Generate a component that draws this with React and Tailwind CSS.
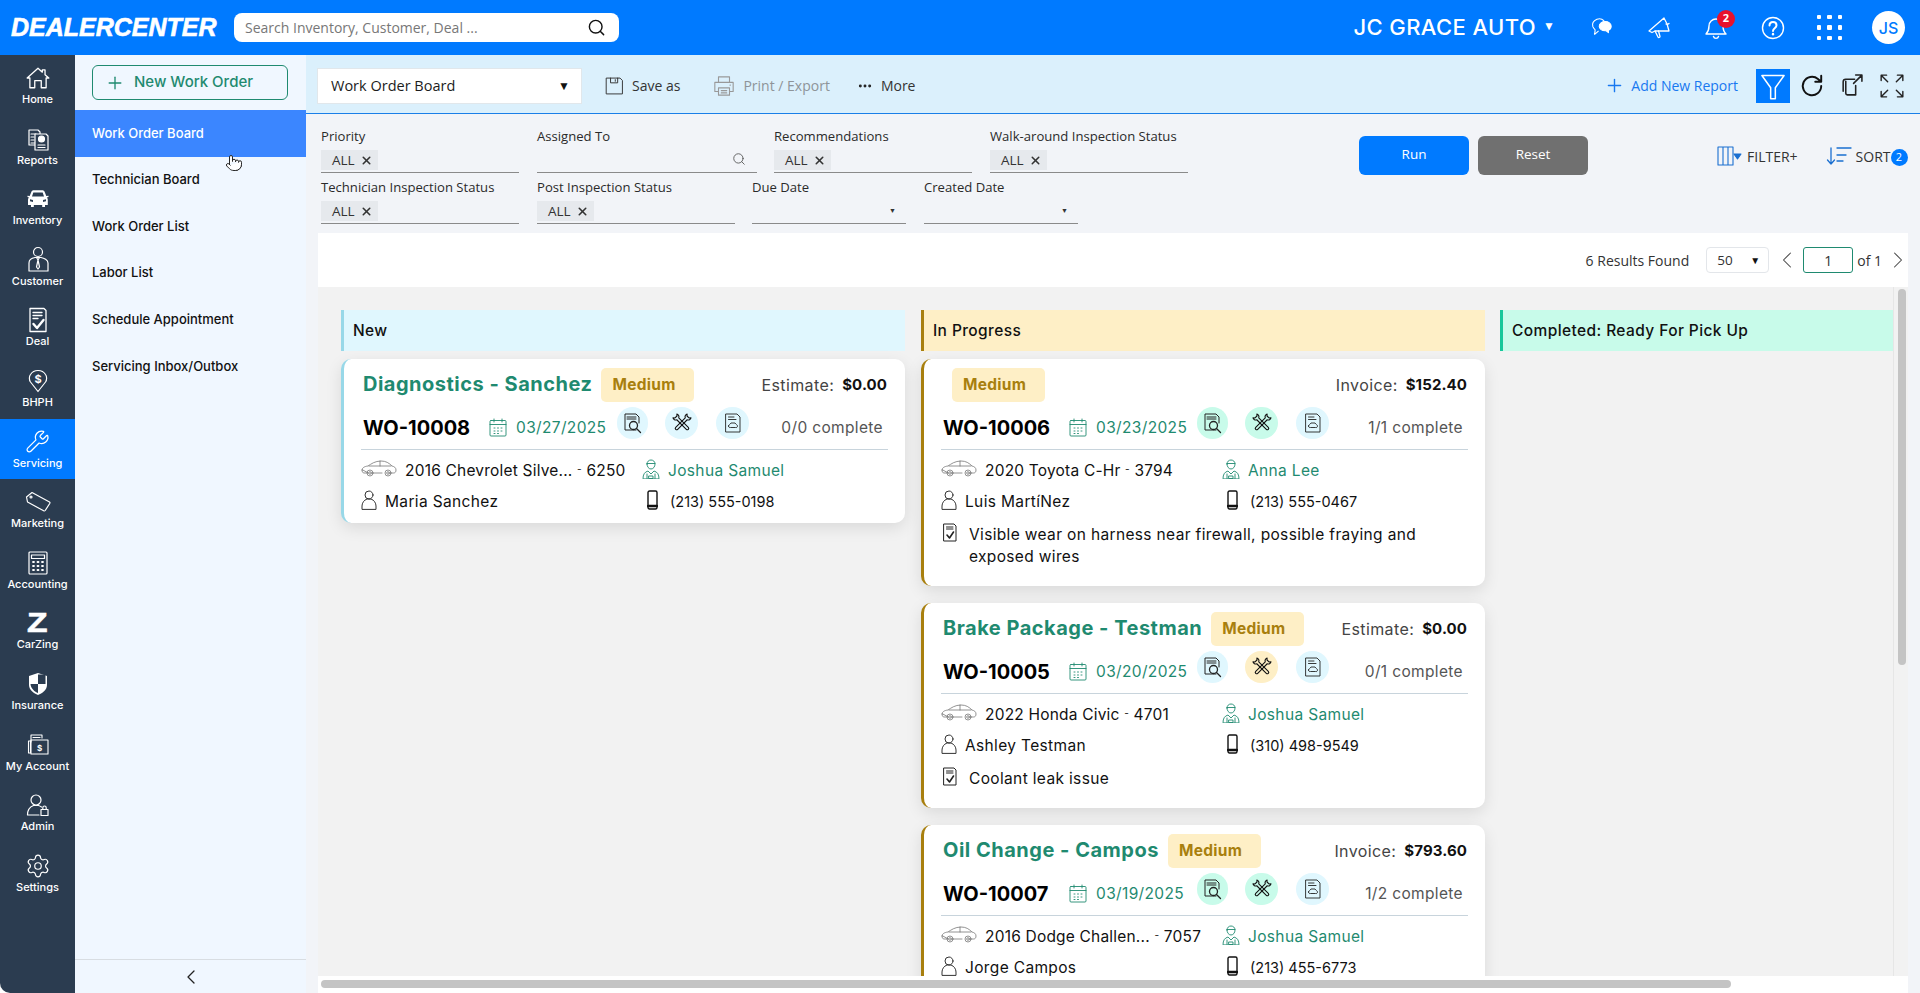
import { Search, Plus, Settings, Wrench, ChevronLeft, ChevronRight, X, MoreHorizontal, Pointer } from "lucide-react";

const mont = "font-['Inter',sans-serif]";
const body = "text-[15.5px] tracking-[0.35px]";

const Ic = ({ w = 24, h = 24, box = "0 0 24 24", sw = 1.2, color = "currentColor", className = "", children }) => (
  <svg width={w} height={h} viewBox={box} fill="none" stroke={color} strokeWidth={sw} strokeLinecap="round" strokeLinejoin="round" className={className}>
    {children}
  </svg>
);

const railItems = [
  {
    label: "Home",
    icon: (
      <Ic w={26} h={26}>
        <path d="M2 12 12 3l4 3.6V4.500h2.500v4.400L22 12h-2.500v9H15v-6.500H9V21H4.500v-9z" />
      </Ic>
    ),
  },
  {
    label: "Reports",
    icon: (
      <Ic w={24} h={26}>
        <path d="M3 3h9l2 2v13H3z" />
        <path d="M5 7h5M5 10h3M5 13h3M5 16h5" />
        <path d="M9 7h11l2 2v14H9z" fill="#2b3c50" />
        <circle cx="15.500" cy="12" r="3" fill="#fff" />
        <path d="M12 18h7M12 20.500h7" />
      </Ic>
    ),
  },
  {
    label: "Inventory",
    icon: (
      <svg width="22" height="18" viewBox="0 0 22 18" fill="#fff">
        <path d="M4.500 1.500C5 .7 6 .3 7 .3h8c1 0 2 .4 2.500 1.200L19.300 6l2.200-.3v1.300l-1.700.4c.7.7 1 1.500 1 2.400v5.200H18v2h-2.800v-2H6.800v2H4v-2H1V9.800c0-.9.300-1.700 1-2.400L.5 7V5.700L2.700 6zM5 6.500h12l-1.300-4H6.300zM3 9.300v2l3 .7V10zm16 0-3 .7v2l3-.7z" fillRule="evenodd" />
      </svg>
    ),
  },
  {
    label: "Customer",
    icon: (
      <Ic w={22} h={28} box="0 0 22 28">
        <circle cx="11" cy="6" r="4.500" />
        <path d="M2 25V17c0-3 3-5 6-5.500h6c3 .5 7 2.500 7 5.500v8z" />
        <path d="M9.500 11.500 11 14l1.500-2.500M11 14l-1.500 7L11 23l1.500-2L11 14" />
      </Ic>
    ),
  },
  {
    label: "Deal",
    icon: (
      <Ic w={20} h={26} box="0 0 20 26" sw={1.3}>
        <path d="M2 1.500h14l2 2V24.500H2z" />
        <path d="M5 5.500h9M5 8.500h9M5 11.500h5" />
        <path d="m5.500 17 3.500 4 6.500-8" strokeWidth="2.400" />
      </Ic>
    ),
  },
  {
    label: "BHPH",
    icon: (
      <Ic w={20} h={24} box="0 0 20 24">
        <path d="M10 22.500 2.500 13C1 11 1 7.500 2.500 5.500 4 3 7 1.500 10 1.500s6 1.500 7.500 4C19 7.500 19 11 17.500 13z" />
        <text x="10" y="13.500" textAnchor="middle" fontSize="11" fontWeight="700" fill="#fff" stroke="none" fontFamily="Inter">$</text>
      </Ic>
    ),
  },
  { label: "Servicing", icon: <Wrench size={25} strokeWidth={1.2} />, active: true },
  {
    label: "Marketing",
    icon: (
      <Ic w={26} h={22} box="0 0 26 22">
        <path d="M1.500 6 7 1.500 24.500 11c.5.300.5 1 .2 1.500l-4.500 7c-.4.500-1 .6-1.500.3L2.500 11z" />
        <circle cx="6" cy="6" r="1" />
      </Ic>
    ),
  },
  {
    label: "Accounting",
    icon: (
      <Ic w={20} h={24} box="0 0 20 24">
        <rect x="1" y="1" width="18" height="22" rx="1" />
        <rect x="3.500" y="4" width="13" height="3.500" />
        <path d="M5 11h1M9.500 11h1M14 11h1M5 15h1M9.500 15h1M14 15h1M5 19h1M9.500 19h1M14 19h1" strokeWidth="1.800" />
      </Ic>
    ),
  },
  {
    label: "CarZing",
    icon: <span className="font-['Liberation_Sans',sans-serif] font-bold text-[24px] leading-[28px] text-white scale-x-[1.4] scale-y-[1.12] [-webkit-text-stroke:0.5px_white]">Z</span>,
  },
  {
    label: "Insurance",
    icon: (
      <svg width="20" height="24" viewBox="0 0 20 24">
        <path d="M10 1 19 4v9c0 5-5 8.500-9 10C6 21.500 1 18 1 13V4z" fill="#fff" />
        <path d="M10 2.500h7.500V12H10zM10 12H2.500c.3 4.500 4.500 8 7.500 9z" fill="#2b3c50" />
      </svg>
    ),
  },
  {
    label: "My Account",
    icon: (
      <Ic w={22} h={24} box="0 0 22 24" sw={1.1}>
        <path d="M4 9V2h11v3" />
        <path d="M1.500 8h2v12h-2zM4 7h17v14H4z" />
        <path d="M6 4.500h7" />
        <text x="12.500" y="18" textAnchor="middle" fontSize="8" fontWeight="700" fill="#fff" stroke="none" fontFamily="Inter">$</text>
      </Ic>
    ),
  },
  {
    label: "Admin",
    icon: (
      <Ic w={24} h={24}>
        <circle cx="10" cy="7" r="5" />
        <path d="M1.500 22c0-5 2-8 6-9.500h5c1 .3 2 .8 3 1.500M1.500 22H13" />
        <rect x="15" y="16.500" width="7" height="6" />
        <path d="M16.800 16.500v-1.800a1.700 1.700 0 0 1 3.400 0v1.800" />
      </Ic>
    ),
  },
  { label: "Settings", icon: <Settings size={26} strokeWidth={1.1} /> },
];

const subItems = ["Work Order Board", "Technician Board", "Work Order List", "Labor List", "Schedule Appointment", "Servicing Inbox/Outbox"];

const Rail = () => (
  <div className="w-[75px] shrink-0 bg-[#2b3c50] rounded-bl-[10px] text-white">
    {railItems.map((r) => (
      <div key={r.label} className={`h-[60.6px] flex flex-col items-center pt-[9px] ${r.active ? "bg-[#007aff]" : ""}`}>
        <div className="h-[28px] flex items-center justify-center">{r.icon}</div>
        <div className={`${mont} text-[11px] leading-[14px] font-medium whitespace-nowrap`}>{r.label}</div>
      </div>
    ))}
  </div>
);

const SubNav = () => (
  <div className={`w-[231px] shrink-0 bg-[#f0f7ff] flex flex-col relative ${mont}`}>
    <div className="h-[55px] pl-[17px] pt-[10px]">
      <div className="w-[196px] h-[35px] border border-[#1f8a70] rounded-[6px] flex items-center pl-[12px] text-[#1f8a70]">
        <Plus size={20} strokeWidth={1.6} />
        <span className="ml-[9px] text-[15px] font-medium">New Work Order</span>
      </div>
    </div>
    {subItems.map((s, i) => (
      <div key={s} className={`h-[46.6px] flex items-center pl-[17px] text-[13px] font-medium ${i === 0 ? "bg-[#3b86ff] text-white" : "text-[#111]"}`}>
        {s}
      </div>
    ))}
    <Pointer size={18} strokeWidth={1.3} fill="#fff" className="absolute left-[150px] top-[99px] text-[#222]" />
    <div className="mt-auto h-[34px] border-t border-[#d8dde2] flex items-center justify-center">
      <ChevronLeft size={24} strokeWidth={1.3} className="text-[#222]" />
    </div>
  </div>
);

const Chip = () => (
  <span className="inline-flex items-center h-[20px] w-[57px] pl-[11px] bg-[#e6e9ed] text-[13.5px] text-[#333]">
    ALL <X size={13} strokeWidth={2.8} className="ml-[5px]" />
  </span>
);

const Field = ({ label, w, chip, search, caret }) => (
  <div className="h-[46px] shrink-0 relative" style={{ width: w }}>
    <div className="text-[13.1px] leading-[18px] text-[#2a2a2a] whitespace-nowrap">{label}</div>
    <div className="h-[28px] pt-[5px] border-b border-[#8a8a8a] flex items-start">
      {chip && <Chip />}
      {search && <Search size={14} strokeWidth={1.5} className="ml-auto mr-[11px] mt-[2px] text-[#555]" />}
      {caret && <span className="ml-auto mr-[10px] mt-[6px] text-[7px] leading-[8px] text-[#333]">▼</span>}
    </div>
  </div>
);

const Toolbar = () => (
  <div className="h-[59px] shrink-0 bg-[#dbf0fc] border-b border-[#1a7fe8] flex items-center pl-[11px] pt-[3px] text-[14px]">
    <div className="w-[265px] h-[36px] bg-white border border-[#e1e7eb] flex items-center pl-[13px] pr-[11px] text-[14.5px] text-[#1c1c1c]">
      Work Order Board
      <span className="ml-auto text-[12px] text-[#111]">▼</span>
    </div>
    <Ic w={19} h={20} color="#333" className="ml-[23px]">
      <path d="M2 2h17l3 3v17H2z" />
      <path d="M7 2v6h9V2M13 4v2" />
    </Ic>
    <span className="ml-[8px] text-[#333]">Save as</span>
    <Ic w={22} h={22} color="#999" className="ml-[33px]">
      <path d="M6 8V2h12v6M6 18H2V8h20v10h-4" />
      <path d="M6 14h12v8H6zM9 17h6M9 19.500h6M18.500 11h.5" />
    </Ic>
    <span className="ml-[8px] text-[#8e9499]">Print / Export</span>
    <MoreHorizontal size={16} strokeWidth={2.4} className="ml-[27px] text-[#222]" />
    <span className="ml-[8px] text-[#333]">More</span>
    <Plus size={21} strokeWidth={1.6} className="ml-auto text-[#1878f0]" />
    <span className="ml-[6px] text-[#1878f0]">Add New Report</span>
    <div className="ml-[18px] w-[34px] h-[34px] bg-[#007aff] flex items-center justify-center">
      <Ic w={28} h={28} color="#fff" sw={1.3}>
        <path d="M2.500 3h19L14 13.500V23h-4v-9.500z" />
      </Ic>
    </div>
    <Ic w={26} h={26} color="#111" sw={1.8} className="ml-[9px]">
      <path d="M20.500 12a8.500 8.500 0 1 1-3-6.500L20.500 8M20.500 2.500V8H15" />
    </Ic>
    <Ic w={25} h={25} color="#222" sw={1.5} className="ml-[14px]">
      <path d="M15 6H6.500A2.500 2.500 0 0 0 4 8.500v9M8 21h8V12M8 21a1.500 1.500 0 0 1-1.500-1.500V8M14 10l8-8M16 2h6v6" />
    </Ic>
    <Ic w={26} h={26} color="#222" sw={1.3} className="ml-[15px] mr-[15px]">
      <path d="m2 2 6 6M2 2v5M2 2h5M22 2l-6 6M22 2v5M22 2h-5M2 22l6-6M2 22v-5M2 22h5M22 22l-6-6M22 22v-5M22 22h-5" />
    </Ic>
  </div>
);

const Filters = () => (
  <div className="h-[119px] shrink-0 flex items-start pt-[13px] pl-[15px]">
    <div className="w-[867px] shrink-0 flex flex-col gap-[5px]">
      <div className="flex">
        <Field label="Priority" w={198} chip />
        <div className="w-[18px]" />
        <Field label="Assigned To" w={220} search />
        <div className="w-[17px]" />
        <Field label="Recommendations" w={198} chip />
        <div className="w-[18px]" />
        <Field label="Walk-around Inspection Status" w={198} chip />
      </div>
      <div className="flex">
        <Field label="Technician Inspection Status" w={198} chip />
        <div className="w-[18px]" />
        <Field label="Post Inspection Status" w={198} chip />
        <div className="w-[17px]" />
        <Field label="Due Date" w={154} caret />
        <div className="w-[18px]" />
        <Field label="Created Date" w={154} caret />
      </div>
    </div>
    <button className="ml-[171px] mt-[9px] w-[110px] h-[39px] pb-[2px] bg-[#007aff] rounded-[6px] text-white text-[13.5px]">Run</button>
    <button className="ml-[9px] mt-[9px] w-[110px] h-[39px] pb-[2px] bg-[#707070] rounded-[6px] text-white text-[13.5px]">Reset</button>
    <div className="ml-[129px] mt-[19px] flex items-center text-[14px] text-[#333] h-[20px]">
      <Ic w={25} h={20} box="0 0 25 20" color="#1a6fd0" sw={1.1}>
        <path d="M1 1h15v18H1zM6 1v18M11 1v18" />
        <path d="m17 8 7 0-3.500 5z" fill="#1a6fd0" />
      </Ic>
      <span className="ml-[5px]">FILTER+</span>
      <Ic w={26} h={20} box="0 0 26 20" color="#1a6fd0" sw={1.3} className="ml-[28px]">
        <path d="M5 2v16M1.500 14 5 18l3.500-4M11 2h14M11 9h9M11 15h6" />
      </Ic>
      <span className="ml-[4px]">SORT</span>
      <span className="w-[17px] h-[17px] rounded-full bg-[#007aff] text-white text-[11px] flex items-center justify-center mt-[3px]">2</span>
    </div>
  </div>
);

const Results = () => (
  <div className="h-[54px] shrink-0 mx-[12px] bg-white flex items-center text-[14px] text-[#333]">
    <span className="ml-auto">6 Results Found</span>
    <div className="ml-[17px] w-[63px] h-[26px] border border-[#e3e6ea] rounded-[4px] flex items-center pl-[10px] pr-[8px] text-[13.5px]">
      50
      <span className="ml-auto text-[10px] text-[#111]">▼</span>
    </div>
    <ChevronLeft size={28} strokeWidth={0.9} className="ml-[4px] text-[#444]" />
    <div className="ml-[2px] w-[50px] h-[26px] border border-[#1f8a70] rounded-[3px] flex items-center justify-center">1</div>
    <span className="ml-[4px]">of 1</span>
    <ChevronRight size={28} strokeWidth={0.9} className="ml-[2px] mr-[-4px] text-[#444]" />
  </div>
);

const CarIcon = () => (
  <Ic w={36} h={17} box="0 0 36 17" color="#777" sw={0.8}>
    <path d="M1 10c0-2 2-3.500 6-4 3-2 7-5 13-5 5 0 8 2 11 5 2 .5 4 1.500 4 4 0 2-1 3-2.500 3H29M21 13H11.500M7 13H3c-1.300 0-2-1.200-2-3z" />
    <circle cx="9" cy="13" r="3" />
    <circle cx="9" cy="13" r="1.300" />
    <circle cx="27" cy="13" r="3" />
    <circle cx="27" cy="13" r="1.300" />
    <path d="M8 6h22M19 1v5" />
  </Ic>
);

const TechIcon = () => (
  <Ic w={18} h={20} box="0 0 18 20" color="#1f8a70" sw={0.9}>
    <path d="M5 5c0-2.500 1.800-4 4-4s4 1.500 4 4-1.500 5-4 5-4-2.500-4-5zM5 4.500h8" />
    <path d="M1 19.500c0-4 1.500-6.500 5-7.500l3 3 3-3c3.500 1 5 3.500 5 7.500zM5 15v4.500M13 15v4.500M7 17h4v2.500H7z" />
  </Ic>
);

const CalIcon = () => (
  <Ic w={18} h={19} box="0 0 18 19" color="#1f8a70" sw={0.9} className="shrink-0">
    <rect x="1" y="2.500" width="16" height="15.500" rx="1" />
    <path d="M1 6.500h16M5 1v3M13 1v3M5 10h1M8.500 10h1M12 10h1M5 13h1M8.500 13h1M12 13h1M5 15.500h1M8.500 15.500h1" />
  </Ic>
);

const Circle = ({ c, w, children }) => (
  <div className={`h-[32px] rounded-full flex items-center justify-center shrink-0 ${c}`} style={{ width: w }}>
    {children}
  </div>
);

const blue = "bg-[#e0f7fe]";
const mint = "bg-[#c8fbea]";
const peach = "bg-[#feefc6]";

const Card = ({ c }) => (
  <div className={`rounded-[10px] border-l-[3px] ${c.edge} bg-white shadow-[0_5px_16px_rgba(0,0,0,0.1)] pt-[9px] pb-[11px] ${mont} text-[#111]`}>
    <div className="h-[34px] pl-[19px] pr-[18px] flex items-center">
      {c.title && <span className="text-[#1f8a70] text-[20px] font-bold tracking-[0.5px] whitespace-nowrap -mt-[2px]">{c.title}</span>}
      <span className="ml-[9px] w-[93px] h-[34px] pl-[11px] rounded-[5px] bg-[#feefc6] text-[#a87f0e] text-[15.5px] tracking-[0.3px] font-bold flex items-center">Medium</span>
      <span className="ml-auto text-[#444] text-[16px] tracking-[0.4px]">{c.amtLabel}:</span>
      <span className="ml-[8px] text-[15px] tracking-[0.1px] font-bold text-[#111]">{c.amt}</span>
    </div>
    <div className="h-[32px] mt-[5px] pl-[19px] pr-[22px] flex items-start">
      <span className="w-[126px] shrink-0 text-[20px] font-bold leading-[24px] mt-[9px] text-black">{c.wo}</span>
      <div className="mt-[11px] w-[27px] shrink-0"><CalIcon /></div>
      <span className={`w-[101px] shrink-0 mt-[11px] leading-[20px] text-[#1f8a70] ${body}`}>{c.date}</span>
      <Circle c={c.dots[0]} w={31}>
        <Ic w={18} h={21} box="0 0 18 21" color="#222" sw={1}>
          <path d="M12 17H1V1h11l3 3v6M3 4h9M3 6h9" />
          <circle cx="9.500" cy="12.500" r="4" strokeWidth="1.300" />
          <path d="m12.500 15.500 4 4" strokeWidth="1.300" />
        </Ic>
      </Circle>
      <div className="w-[17px] shrink-0" />
      <Circle c={c.dots[1]} w={33}>
        <Ic w={20} h={20} box="0 0 20 20" color="#111" sw={1.1}>
          <g transform="rotate(45 10 10)">
            <path d="M8.600 4v13.500a1.400 1.400 0 0 0 2.800 0V4C13 3.300 13.500 1.500 12.800 0L11.400 1.500H8.600L7.200 0C6.500 1.500 7 3.300 8.600 4z" />
          </g>
          <g transform="rotate(-45 10 10)">
            <path d="M8.600 4v13.500a1.400 1.400 0 0 0 2.800 0V4C13 3.300 13.500 1.500 12.800 0L11.400 1.500H8.600L7.200 0C6.500 1.500 7 3.300 8.600 4z" />
          </g>
        </Ic>
      </Circle>
      <div className="w-[18px] shrink-0" />
      <Circle c={c.dots[2]} w={33}>
        <Ic w={16} h={20} box="0 0 16 20" color="#222" sw={0.9}>
          <path d="M1 1h11l3 3v15H1zM3.500 4H9M3.500 6.500H11" />
          <path d="M3.500 13c0-1 1.500-1.500 2.500-3h4c1 1.500 2.500 2 2.500 3s-1 2-2 1.500h-5c-1 .5-2-.5-2-1.500z" />
        </Ic>
      </Circle>
      <span className={`ml-auto mt-[11px] leading-[20px] text-[#555] ${body}`}>{c.done}</span>
    </div>
    <div className="mt-[10px] ml-[17px] mr-[17px] h-px bg-[#c8d4dc]" />
    <div className={`mt-[10px] pl-[17px] h-[21px] flex items-center ${body}`}>
      <div className="w-[44px] shrink-0 -mt-[4px]"><CarIcon /></div>
      <span className="w-[237px] shrink-0 whitespace-nowrap tracking-[0.2px]">
        {c.car[0]} <span className="text-[10px] relative -top-[3px]">-</span> {c.car[1]}
      </span>
      <div className="w-[26px] shrink-0 -mt-[4px]"><TechIcon /></div>
      <span className="text-[#1f8a70]">{c.tech}</span>
    </div>
    <div className={`mt-[10px] pl-[17px] h-[21px] flex items-center ${body}`}>
      <Ic w={16} h={20} box="0 0 16 20" color="#333" sw={1} className="shrink-0 -mt-[3px]">
        <circle cx="8" cy="5" r="4" />
        <path d="M1 19v-3c0-3 2-6 5-7h4c3 1 5 4 5 7v3z" />
      </Ic>
      <span className="w-[262px] ml-[8px] shrink-0">{c.name}</span>
      <Ic w={11} h={20} box="0 0 11 20" color="#111" sw={1.4} className="shrink-0 -mt-[3px]">
        <rect x="1" y="1" width="9" height="18" rx="1.500" />
        <path d="M1 16h9" strokeWidth="2.400" />
      </Ic>
      <span className="ml-[12px] text-[14.5px] tracking-normal">{c.phone}</span>
    </div>
    {c.note && (
      <div className={`mt-[12px] mb-[7px] pl-[19px] pr-[40px] flex items-start leading-[22px] ${body}`}>
        <Ic w={14} h={19} box="0 0 14 19" color="#222" sw={1} className="shrink-0 -mt-[1px]">
          <path d="M1 1h10l2 2v15H1zM3.500 4H10M3.500 6H10" />
          <path d="m4 12 2.500 3L10.500 9" strokeWidth="1.600" />
        </Ic>
        <span className="ml-[12px]">{c.note}</span>
      </div>
    )}
  </div>
);

const inProgress = [
  {
    edge: "border-[#a87f0e]", title: "", amtLabel: "Invoice", amt: "$152.40", wo: "WO-10006", date: "03/23/2025", done: "1/1 complete",
    car: ["2020 Toyota C-Hr", "3794"], tech: "Anna Lee", name: "Luis MartíNez", phone: "(213) 555-0467", dots: [mint, mint, blue],
    note: "Visible wear on harness near firewall, possible fraying and exposed wires",
  },
  {
    edge: "border-[#a87f0e]", title: "Brake Package - Testman", amtLabel: "Estimate", amt: "$0.00", wo: "WO-10005", date: "03/20/2025", done: "0/1 complete",
    car: ["2022 Honda Civic", "4701"], tech: "Joshua Samuel", name: "Ashley Testman", phone: "(310) 498-9549", dots: [blue, peach, blue],
    note: "Coolant leak issue",
  },
  {
    edge: "border-[#a87f0e]", title: "Oil Change - Campos", amtLabel: "Invoice", amt: "$793.60", wo: "WO-10007", date: "03/19/2025", done: "1/2 complete",
    car: ["2016 Dodge Challen...", "7057"], tech: "Joshua Samuel", name: "Jorge Campos", phone: "(213) 455-6773", dots: [mint, mint, blue],
  },
];

const diag = {
  edge: "border-[#98d8e8]", title: "Diagnostics - Sanchez", amtLabel: "Estimate", amt: "$0.00", wo: "WO-10008", date: "03/27/2025", done: "0/0 complete",
  car: ["2016 Chevrolet Silve...", "6250"], tech: "Joshua Samuel", name: "Maria Sanchez", phone: "(213) 555-0198", dots: [blue, blue, blue],
};

const ColHead = ({ cls, children }) => (
  <div className={`h-[41px] border-l-[3px] pl-[9px] flex items-center text-[15.5px] tracking-[0.4px] font-medium text-[#111] mb-[8px] ${mont} ${cls}`}>{children}</div>
);

const Board = () => (
  <div className="flex-1 min-h-0 mx-[12px] bg-[#f2f2f2] relative overflow-hidden pt-[23px] pl-[23px] flex items-start">
    <div className="w-[564px] shrink-0">
      <ColHead cls="bg-[#e0f7fe] border-[#98d8e8]">New</ColHead>
      <Card c={diag} />
    </div>
    <div className="w-[564px] ml-[16px] shrink-0 flex flex-col gap-[17px]">
      <div className="-mb-[17px]"><ColHead cls="bg-[#feefc6] border-[#a87f0e]">In Progress</ColHead></div>
      {inProgress.map((c) => <Card key={c.wo} c={c} />)}
    </div>
    <div className="w-[393px] ml-[15px] shrink-0">
      <ColHead cls="bg-[#c8fbea] border-[#16c79a]">Completed: Ready For Pick Up</ColHead>
    </div>
    <div className="absolute right-0 top-0 bottom-0 w-[15px] bg-[#f2f2f2] border-l border-[#e6e6e6]">
      <div className="absolute left-[4px] top-[2px] w-[8px] h-[376px] rounded-[4px] bg-[#c4c4c4]" />
    </div>
  </div>
);

export default function App() {
  return (
    <div className="h-screen w-full overflow-hidden flex flex-col font-['Open_Sans',sans-serif] bg-white">
      <div className="h-[55px] shrink-0 bg-[#007aff] flex items-center text-white">
        <span className="ml-[11px] w-[205px] font-['Liberation_Sans',sans-serif] italic font-bold text-[25px] [-webkit-text-stroke:0.6px_white] whitespace-nowrap">DEALERCENTER</span>
        <div className="ml-[18px] w-[385px] h-[29px] bg-white rounded-[8px] flex items-center pl-[11px] pr-[13px] text-[14px] text-[#777]">
          Search Inventory, Customer, Deal ...
          <Search size={19} strokeWidth={1.8} className="ml-auto text-[#111]" />
        </div>
        <span className={`ml-auto text-[22px] tracking-[0.4px] font-medium whitespace-nowrap ${mont}`}>JC GRACE AUTO</span>
        <span className="ml-[7px] text-[12px] -mt-[4px]">▼</span>
        <div className="ml-[18px] w-[57px] flex justify-center">
          <Ic w={24} h={22} color="#fff">
            <path d="M14 4C12 2 9 1.500 6.500 2.500 3 4 1 7 2 10.500c.5 1.500 1.500 2.500 2.500 3.500L4 19l4-3.500" />
            <path d="M22 10c0-3-3-5-6.500-5S9 7 9 10s3 5 6.500 5h1l2.500 2v-2.500c2-1 3-2.500 3-4.500z" fill="#fff" />
          </Ic>
        </div>
        <div className="w-[57px] flex justify-center">
          <Ic w={24} h={24} color="#fff" sw={1.3}>
            <path d="M2 15 17 2c2 3 4 8 5 13H8l-3 1.500z" />
            <path d="M8 15l3 6c.5 1 2 .5 2-.5L11.500 15M19 8c1 .5 2 .3 3-.5" />
          </Ic>
        </div>
        <div className="w-[57px] flex justify-center relative">
          <Ic w={24} h={26} color="#fff" sw={1.4}>
            <path d="M5 10a7 7 0 0 1 14 0c0 4 1 6 3 8H2c2-2 3-4 3-8zM9.500 20.500a2.600 2.600 0 0 0 5 0" />
          </Ic>
          <span className="absolute left-[30px] -top-[5px] w-[18px] h-[18px] rounded-full bg-[#e8112d] text-white text-[11px] font-bold flex items-center justify-center">2</span>
        </div>
        <div className="w-[57px] flex justify-center">
          <Ic w={24} h={24} color="#fff" sw={1.4}>
            <circle cx="12" cy="12" r="10.500" />
            <path d="M8.500 9.500C8.500 7 10 6 12 6s3.500 1.300 3.500 3.300c0 3-3.500 3-3.500 5.700" strokeWidth="2" />
            <path d="M12 18v.2" strokeWidth="2.400" />
          </Ic>
        </div>
        <div className="w-[57px] flex justify-center">
          <div className="grid grid-cols-3 gap-[6px]">
            {[1, 2, 3, 4, 5, 6, 7, 8, 9].map((d) => <span key={d} className="w-[4.5px] h-[4.5px] rounded-[1px] bg-white" />)}
          </div>
        </div>
        <div className={`ml-[14px] mr-[15px] w-[33px] h-[33px] rounded-full bg-white text-[#007aff] text-[16px] font-medium flex items-center justify-center ${mont}`}>JS</div>
      </div>
      <div className="flex-1 min-h-0 flex">
        <Rail />
        <SubNav />
        <div className="flex-1 min-w-0 flex flex-col bg-[#f2f4f8]">
          <Toolbar />
          <Filters />
          <Results />
          <Board />
          <div className="h-[17px] shrink-0 mx-[12px] bg-white pt-[4px] pl-[3px]">
            <div className="w-[1410px] h-[8px] rounded-[4px] bg-[#c4c4c4]" />
          </div>
        </div>
      </div>
    </div>
  );
}
